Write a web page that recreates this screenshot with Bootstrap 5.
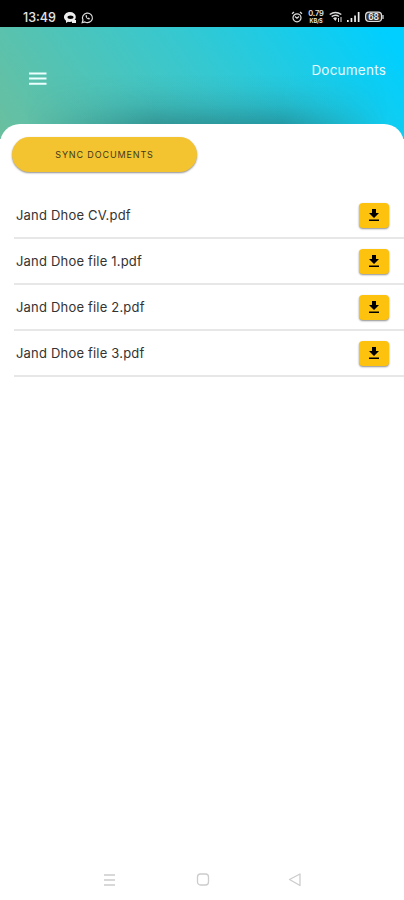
<!DOCTYPE html>
<html lang="en">
<head>
<meta charset="utf-8">
<meta name="viewport" content="width=device-width, initial-scale=1">
<title>Documents</title>
<link href="https://cdn.jsdelivr.net/npm/bootstrap@5.3.0/dist/css/bootstrap.min.css" rel="stylesheet">
<style>
body{font-family:Inter,"Open Sans",sans-serif;height:900px;overflow:hidden;color:#333}
svg{display:block;flex:none}
.status{height:27px;background:#000;color:#e4e4e4;padding:8px 20px 0 23px}
.clock{font-size:12.5px;line-height:19px;width:41px;font-weight:500;white-space:nowrap}
.chats{margin-top:4px}
.indicators{gap:4px;margin-top:1px}
.rate{font-size:7.5px;width:18px;font-weight:600;letter-spacing:-.1px}
.rate span{display:block;line-height:10px}
.rate .unit{font-size:5.5px;line-height:7px;font-weight:700;margin-top:-1px}
.hero{height:112px;background:linear-gradient(55deg,#6abf9e 0%,#36c8d0 52%,#00cfff 96%);padding:0 18px 0 28px}
.hero-title{font-size:13.5px;line-height:20px;margin-top:32.500px;letter-spacing:.22px;color:#e9fbff}
.menu-btn{margin-top:42px}
.shade{height:50px;margin-top:-65px;background:linear-gradient(to top,rgba(25,90,95,.42),rgba(25,90,95,.17) 38%,rgba(25,90,95,.04) 75%,transparent);-webkit-mask-image:linear-gradient(to right,transparent 6%,#000 38%,#000 70%,transparent 96%);mask-image:linear-gradient(to right,transparent 6%,#000 38%,#000 70%,transparent 96%)}
.sheet{background:#fff;border-radius:20px 20px 0 0;padding-top:13px}
.sync{width:185px;height:35px;margin-left:12px;background:#f4c430;font-size:9px;letter-spacing:.87px;color:#40381d;box-shadow:0 1px 2px rgba(0,0,0,.45);padding:0}
.docs{margin:21px 0 0 14px}
.doc{height:46px;border-bottom:2px solid #e7e7e7;padding:0 15px 0 2px;font-size:13px;letter-spacing:.19px}
.doc span{padding-top:2px}
.get{width:30px;height:25px;background:#fdc20d;border-radius:4px;box-shadow:0 1px 2px rgba(0,0,0,.45)}
.keys{height:40px;padding:0 102px 0 103px}
</style>
<script src="https://cdn.jsdelivr.net/npm/bootstrap@5.3.0/dist/js/bootstrap.bundle.min.js"></script>
</head>
<body class="d-flex flex-column bg-white">
<div class="status d-flex align-items-start">
  <span class="clock">13:49</span>
  <svg class="chats" width="30" height="14" viewBox="0 0 30 14"><path fill="#eee" d="M6 0a5.8 5 0 0 1 0 10 8 8 0 0 1-2-.3L2 11V8.800A5.500 5 0 0 1 6 0z"/><path fill="#eee" d="M8 8h4v3H8z"/><ellipse cx="6.500" cy="5.200" rx="3" ry="1.700" fill="#000"/><path d="M18.200 10.700l.8-2.700a5 4.700 0 1 1 1.900 1.900z" fill="none" stroke="#ddd" stroke-width="1.200"/><path d="M21.500 3.500c0 2.300 1.500 4 4 4.100l.4-1.300-1.500-.7-.7.6-1-1.100.5-.8-.6-1.300z" fill="#ddd"/></svg>
  <div class="indicators d-flex ms-auto align-items-center">
    <svg width="12" height="12" viewBox="0 0 12 12" fill="none" stroke="#ddd" stroke-width="1.200"><circle cx="6" cy="6.800" r="4"/><path d="M1 2.800L3 1M9 1l2 1.800M4 5.500l2 1.700 2-1.700"/></svg>
    <div class="rate text-center"><span>0.79</span><span class="unit">KB/S</span></div>
    <svg width="14" height="12" viewBox="0 0 14 12" fill="none" stroke="#ddd"><path stroke-width="1.500" d="M.7 3.500Q6.500-.7 12.300 3.500M2.700 5.700Q6.500 3 10 5.500"/><path fill="#ddd" stroke="none" d="M4 7.200Q6.500 5.500 8 7L6.500 10z"/><path d="M9.500 11V7M12 6v5"/></svg>
    <svg width="14" height="12" viewBox="0 0 14 12" fill="#eee"><path d="M0 9h1.700v2H0zM3.600 7h1.700v4H3.600zM7.200 4.500h1.700V11H7.200zM10.800 1h1.700v10h-1.700z"/></svg>
    <svg width="19" height="12" viewBox="0 0 19 12"><rect x=".6" y="1.100" width="16" height="9.400" rx="3.500" fill="#333" stroke="#ddd" stroke-width="1.200"/><path d="M18 4v4" stroke="#ddd" stroke-width="1.200"/><text x="8.600" y="9" text-anchor="middle" font-size="8.500" font-weight="600" fill="#eee">68</text></svg>
  </div>
</div>
<header class="hero d-flex justify-content-between align-items-start">
  <svg class="menu-btn" width="20" height="20" viewBox="0 0 20 20"><path d="M1 4.500h17.500M1 9.600h17.500M1 14.700h17.500" stroke="#edffff" stroke-width="2"/></svg>
  <div class="hero-title">Documents</div>
</header>
<div class="shade"></div>
<main class="sheet flex-grow-1">
  <button class="sync btn rounded-pill border-0 d-block">SYNC DOCUMENTS</button>
  <div class="docs">
    <div class="doc d-flex align-items-center justify-content-between"><span>Jand Dhoe CV.pdf</span><button class="get btn border-0 p-0 d-flex align-items-center justify-content-center"><svg width="12" height="14" viewBox="0 0 12 14"><path d="M4 1h4v4h3L6 10 1 5h3zM1 11.500h10V13H1z"/></svg></button></div>
    <div class="doc d-flex align-items-center justify-content-between"><span>Jand Dhoe file 1.pdf</span><button class="get btn border-0 p-0 d-flex align-items-center justify-content-center"><svg width="12" height="14" viewBox="0 0 12 14"><path d="M4 1h4v4h3L6 10 1 5h3zM1 11.500h10V13H1z"/></svg></button></div>
    <div class="doc d-flex align-items-center justify-content-between"><span>Jand Dhoe file 2.pdf</span><button class="get btn border-0 p-0 d-flex align-items-center justify-content-center"><svg width="12" height="14" viewBox="0 0 12 14"><path d="M4 1h4v4h3L6 10 1 5h3zM1 11.500h10V13H1z"/></svg></button></div>
    <div class="doc d-flex align-items-center justify-content-between"><span>Jand Dhoe file 3.pdf</span><button class="get btn border-0 p-0 d-flex align-items-center justify-content-center"><svg width="12" height="14" viewBox="0 0 12 14"><path d="M4 1h4v4h3L6 10 1 5h3zM1 11.500h10V13H1z"/></svg></button></div>
  </div>
</main>
<footer class="keys d-flex justify-content-between">
  <svg width="14" height="40" viewBox="0 0 14 40" stroke="#ccc" stroke-width="1.300"><path d="M1 15h11M1 20h11M1 25h11"/></svg>
  <svg width="14" height="40" viewBox="0 0 14 40" fill="none" stroke="#ccc" stroke-width="1.300"><rect x="1.500" y="14" width="11" height="11" rx="3"/></svg>
  <svg width="14" height="40" viewBox="0 0 14 40" fill="none" stroke="#ccc" stroke-width="1.300" stroke-linejoin="round"><path d="M1.500 19.500L12 14v11.500z"/></svg>
</footer>
</body>
</html>
